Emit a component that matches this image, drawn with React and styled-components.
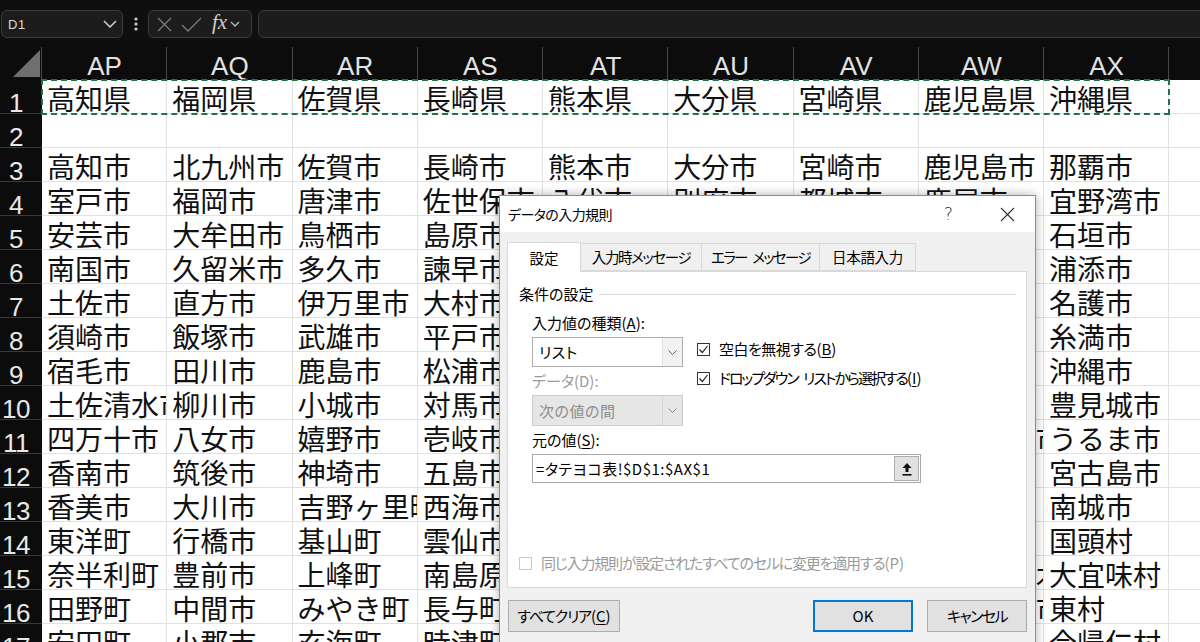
import React from "react";
import styled, { createGlobalStyle } from "styled-components";

const COLS = ["AP", "AQ", "AR", "AS", "AT", "AU", "AV", "AW", "AX", ""];
const PREFS = ["高知県", "福岡県", "佐賀県", "長崎県", "熊本県", "大分県", "宮崎県", "鹿児島県", "沖縄県"];

const CITIES = [
    ["高知市", "室戸市", "安芸市", "南国市", "土佐市", "須崎市", "宿毛市", "土佐清水市", "四万十市", "香南市", "香美市", "東洋町", "奈半利町", "田野町", "安田町"],
    ["北九州市", "福岡市", "大牟田市", "久留米市", "直方市", "飯塚市", "田川市", "柳川市", "八女市", "筑後市", "大川市", "行橋市", "豊前市", "中間市", "小郡市"],
    ["佐賀市", "唐津市", "鳥栖市", "多久市", "伊万里市", "武雄市", "鹿島市", "小城市", "嬉野市", "神埼市", "吉野ヶ里町", "基山町", "上峰町", "みやき町", "玄海町"],
    ["長崎市", "佐世保市", "島原市", "諫早市", "大村市", "平戸市", "松浦市", "対馬市", "壱岐市", "五島市", "西海市", "雲仙市", "南島原市", "長与町", "時津町"],
    ["熊本市", "八代市", "人吉市", "荒尾市", "水俣市", "玉名市", "山鹿市", "菊池市", "宇土市", "上天草市", "宇城市", "阿蘇市", "天草市", "合志市", "美里町"],
    ["大分市", "別府市", "中津市", "日田市", "佐伯市", "臼杵市", "津久見市", "竹田市", "豊後高田市", "杵築市", "宇佐市", "豊後大野市", "由布市", "国東市", "姫島村"],
    ["宮崎市", "都城市", "延岡市", "日南市", "小林市", "日向市", "串間市", "西都市", "えびの市", "三股町", "高原町", "国富町", "綾町", "高鍋町", "新富町"],
    ["鹿児島市", "鹿屋市", "枕崎市", "阿久根市", "出水市", "指宿市", "西之表市", "垂水市", "薩摩川内市", "日置市", "曽於市", "霧島市", "いちき串木野市", "南さつま市", "志布志市"],
    ["那覇市", "宜野湾市", "石垣市", "浦添市", "名護市", "糸満市", "沖縄市", "豊見城市", "うるま市", "宮古島市", "南城市", "国頭村", "大宜味村", "東村", "今帰仁村"],
];

// letter spacing narrows the kana, which are wider in Noto than in the Windows UI font
const TABS = [
    { label: "設定", w: 74, ls: 0, active: true },
    { label: "入力時メッセージ", w: 121, ls: -1.4 },
    { label: "エラー\u2002メッセージ", w: 118, ls: -1.7 },
    { label: "日本語入力", w: 96, ls: -0.3 },
];

export default function App() {
    const rows = [];
    for (let r = 2; r <= 17; r++) {
        rows.push(
            <React.Fragment key={r}>
                <RowHead>{r}</RowHead>
                {COLS.map((c, i) => (
                    <Cell key={c + i}>{r >= 3 && CITIES[i] ? CITIES[i][r - 3] : ""}</Cell>
                ))}
            </React.Fragment>
        );
    }

    return (
        <Page>
            <GlobalStyle />
            <Toolbar>
                <NameBox>
                    <span>D1</span>
                    <svg width="14" height="8" viewBox="0 0 14 8"><path d="M1 1 L7 7 L13 1" fill="none" stroke="#cfcfcf" strokeWidth="1.5" /></svg>
                </NameBox>
                <Grip>
                    <svg width="4" height="14" viewBox="0 0 4 14">
                        <circle cx="2" cy="2" r="1.6" fill="#cfcfcf" />
                        <circle cx="2" cy="7" r="1.6" fill="#cfcfcf" />
                        <circle cx="2" cy="12" r="1.6" fill="#cfcfcf" />
                    </svg>
                </Grip>
                <FormulaTools>
                    <svg width="15" height="15" viewBox="0 0 15 15"><path d="M1 1 L14 14 M14 1 L1 14" stroke="#7a7a7a" strokeWidth="1.4" /></svg>
                    <svg width="21" height="15" viewBox="0 0 21 15"><path d="M1 8 L7 14 L20 1" fill="none" stroke="#7a7a7a" strokeWidth="1.4" /></svg>
                    <Fx>fx</Fx>
                    <svg width="10" height="6" viewBox="0 0 10 6"><path d="M1 1 L5 5 L9 1" fill="none" stroke="#bdbdbd" strokeWidth="1.3" /></svg>
                </FormulaTools>
                <FormulaBar />
            </Toolbar>

            <Sheet>
                <Corner>
                    <svg width="27" height="27" viewBox="0 0 27 27"><polygon points="27,0 27,27 0,27" fill="#6f6f6f" /></svg>
                </Corner>
                {COLS.map((c, i) => <ColHead key={"h" + i}>{c}</ColHead>)}

                <RowHead>1</RowHead>
                <CopyBand>
                    {PREFS.map((p) => <Cell key={p}>{p}</Cell>)}
                </CopyBand>
                <Cell />

                {rows}
            </Sheet>

            <Dialog>
                <TitleBar>
                    <Tight $ls={-0.6}>データの入力規則</Tight>
                    <HelpMark>?</HelpMark>
                    <CloseMark>
                        <svg width="15" height="15" viewBox="0 0 15 15"><path d="M1 1 L14 14 M14 1 L1 14" stroke="#333" strokeWidth="1.1" /></svg>
                    </CloseMark>
                </TitleBar>

                <Body>
                    <TabRow>
                        {TABS.map((t) => (
                            <Tab key={t.label} $w={t.w} $active={t.active}>
                                <Tight $ls={t.ls}>{t.label}</Tight>
                            </Tab>
                        ))}
                    </TabRow>

                    <Panel>
                        <Legend>
                            <span>条件の設定</span>
                            <Rule />
                        </Legend>

                        <FormGrid>
                            <Label $area="l1">入力値の種類(<U>A</U>):</Label>
                            <Combo $area="c1">
                                <ComboText>リスト</ComboText>
                                <ComboArrow>
                                    <svg width="9" height="5" viewBox="0 0 9 5"><path d="M0.5 0.5 L4.5 4.5 L8.5 0.5" fill="none" stroke="#606060" strokeWidth="1" /></svg>
                                </ComboArrow>
                            </Combo>
                            <Checks>
                                <CheckRow>
                                    <CheckBox><CheckMark /></CheckBox>
                                    <span><Tight $ls={-0.5}>空白を無視する</Tight>(<U>B</U>)</span>
                                </CheckRow>
                                <CheckRow>
                                    <CheckBox><CheckMark /></CheckBox>
                                    <span><Tight $ls={-2}>{"ドロップダウン\u2002リストから選択する"}</Tight>(<U>I</U>)</span>
                                </CheckRow>
                            </Checks>
                            <Label $area="l2" $disabled>データ(D):</Label>
                            <Combo $area="c2" $disabled>
                                <ComboText>次の値の間</ComboText>
                                <ComboArrow $disabled>
                                    <svg width="9" height="5" viewBox="0 0 9 5"><path d="M0.5 0.5 L4.5 4.5 L8.5 0.5" fill="none" stroke="#8a8a8a" strokeWidth="1" /></svg>
                                </ComboArrow>
                            </Combo>
                            <Label $area="l3">元の値(<U>S</U>):</Label>
                            <SourceInput>
                                <SourceText>=タテヨコ表!$D$1:$AX$1</SourceText>
                                <RefButton>
                                    <svg width="10" height="14" viewBox="0 0 10 14">
                                        <polygon points="5,1 9.5,6 6.5,6 6.5,10 3.5,10 3.5,6 0.5,6" fill="#111" />
                                        <rect x="0.5" y="12" width="9" height="1.6" fill="#111" />
                                    </svg>
                                </RefButton>
                            </SourceInput>
                        </FormGrid>

                        <ApplyAll>
                            <CheckBox $disabled />
                            <span><Tight $ls={-1.2}>同じ入力規則が設定されたすべてのセルに変更を適用する</Tight>(P)</span>
                        </ApplyAll>
                    </Panel>

                    <ButtonRow>
                        <Button $w={112}><Tight $ls={-1.2}>すべてクリア</Tight>(<U>C</U>)</Button>
                        <Spacer />
                        <Button $w={100} $primary>OK</Button>
                        <Button $w={100}><Tight $ls={-1.6}>キャンセル</Tight></Button>
                    </ButtonRow>
                </Body>
            </Dialog>
        </Page>
    );
}

function CheckMark() {
    return (
        <svg width="11" height="11" viewBox="0 0 11 11">
            <path d="M1.5 5.5 L4.3 8.5 L9.5 2" fill="none" stroke="#222" strokeWidth="1.2" />
        </svg>
    );
}

const GlobalStyle = createGlobalStyle`
    html, body {
        margin: 0;
        padding: 0;
        background: #0c0c0c;
        overflow: hidden;
    }
    body {
        font-family: "Noto Sans CJK JP", "Noto Sans", sans-serif;
    }
`;

const Page = styled.div`
    position: relative;
    width: 1200px;
    height: 642px;
    overflow: hidden;
    background: #0c0c0c;
`;

// ---- formula bar ----

const Toolbar = styled.div`
    height: 40px;
    box-sizing: border-box;
    padding: 10px 0 2px 1px;
    display: flex;
    background: #0f0f0f;
`;

const Pill = styled.div`
    box-sizing: border-box;
    height: 28px;
    background: #1c1c1c;
    border: 1px solid #3b3b3b;
    border-radius: 6px;
    display: flex;
    align-items: center;
`;

const NameBox = styled(Pill)`
    width: 122px;
    padding: 0 5px 0 6px;
    justify-content: space-between;
    color: #dcdcdc;
    font: 13px "Liberation Sans", Arial, sans-serif;
    letter-spacing: 0.5px;
`;

const Grip = styled.div`
    width: 25px;
    display: flex;
    align-items: center;
    justify-content: center;
`;

const FormulaTools = styled(Pill)`
    width: 104px;
    padding: 0 0 0 8px;
    gap: 10px;

    svg:nth-of-type(2) {
        margin-left: -1px;
    }
`;

const Fx = styled.span`
    font: italic 21px/1 "Liberation Serif", "Times New Roman", serif;
    color: #cfcfcf;
    margin: -3px -7px 0 0;
`;

const FormulaBar = styled(Pill)`
    flex: 1;
    margin: 0 -20px 0 6px;
`;

// ---- sheet ----

const Sheet = styled.div`
    display: grid;
    grid-template-columns: 42px repeat(10, 125.25px);
    grid-template-rows: 40px repeat(17, 34px);
`;

const HeaderBase = styled.div`
    box-sizing: border-box;
    background: linear-gradient(#474747, #474747) right 7px / 1px 33px no-repeat, #0c0c0c;
`;

const Corner = styled(HeaderBase)`
    display: flex;
    align-items: flex-end;
    justify-content: flex-end;
    padding: 0 2px 3px 0;
`;

const ColHead = styled(HeaderBase)`
    color: #e2e2e2;
    font: 26px/28px "Liberation Sans", Arial, sans-serif;
    text-align: center;
    padding-top: 12px;
`;

const RowHead = styled.div`
    box-sizing: border-box;
    background: #0c0c0c;
    border-bottom: 1px solid #3a3a3a;
    color: #e8e8e8;
    font: 26px/20px "Liberation Sans", Arial, sans-serif;
    letter-spacing: -0.5px;
    display: flex;
    align-items: flex-end;
    justify-content: center;
    padding-right: 10px;
`;

const Cell = styled.div`
    box-sizing: border-box;
    background: #fff;
    border-right: 1px solid #e1e1e1;
    border-bottom: 1px solid #e1e1e1;
    color: #111;
    font: 28px/33px "Noto Sans CJK JP", sans-serif;
    padding: 2px 0 0 5px;
    white-space: nowrap;
    overflow: hidden;
`;

const CopyBand = styled.div`
    grid-column: 2 / 11;
    display: grid;
    grid-template-columns: repeat(9, 1fr);
    outline: 2px dashed #217346;
    outline-offset: -1px;
    position: relative;
    z-index: 1;
`;

// ---- dialog ----

const Dialog = styled.div`
    position: absolute;
    left: 499px;
    top: 195px;
    width: 537px;
    height: 470px;
    box-sizing: border-box;
    border: 1px solid #8c8c8c;
    background: #f0f0f0;
    box-shadow: 0 0 10px rgba(0, 0, 0, 0.3);
    font: 15px/20px "Noto Sans CJK JP", sans-serif;
    font-feature-settings: "palt";
    color: #000;
    z-index: 5;
`;

const Tight = styled.span`
    letter-spacing: ${(p) => p.$ls}px;
`;

const TitleBar = styled.div`
    height: 36px;
    background: #fff;
    display: flex;
    align-items: center;
    padding-left: 8px;
    font-size: 14px;
`;

const HelpMark = styled.span`
    margin-left: auto;
    font: 17px "DejaVu Sans", sans-serif;
    font-weight: 300;
    color: #333;
`;

const CloseMark = styled.span`
    display: flex;
    margin: 0 20px 0 47px;
`;

const Body = styled.div`
    padding: 10px 8px 0 7px;
    display: flex;
    flex-direction: column;
`;

const TabRow = styled.div`
    height: 29px;
    display: flex;
    align-items: flex-end;
    position: relative;
    z-index: 1;
`;

const Tab = styled.div`
    box-sizing: border-box;
    width: ${(p) => p.$w}px;
    height: ${(p) => (p.$active ? 30 : 28)}px;
    margin-bottom: ${(p) => (p.$active ? -1 : 0)}px;
    background: ${(p) => (p.$active ? "#fff" : "#f0f0f0")};
    border: 1px solid #d9d9d9;
    border-bottom: ${(p) => (p.$active ? "none" : "1px solid #d9d9d9")};
    border-left: ${(p) => (p.$active ? "1px solid #d9d9d9" : "none")};
    display: flex;
    align-items: center;
    justify-content: center;
    white-space: nowrap;
    font-size: 14.5px;
`;

const Panel = styled.div`
    height: 317px;
    box-sizing: border-box;
    background: #fff;
    border: 1px solid #d9d9d9;
    display: flex;
    flex-direction: column;
    padding: 12px 10px 14px 11px;
`;

const Legend = styled.div`
    display: flex;
    align-items: center;
    gap: 6px;
`;

const Rule = styled.div`
    flex: 1;
    height: 1px;
    background: #dcdcdc;
`;

const FormGrid = styled.div`
    margin: 9px 0 0 13px;
    display: grid;
    grid-template-columns: 151px auto;
    grid-template-rows: 20px 30px 20px 31px 20px 29px;
    grid-template-areas:
        "l1 ."
        "c1 ck"
        "l2 ck"
        "c2 ."
        "l3 l3"
        "in in";
    column-gap: 14px;
    row-gap: 4px;
`;

const Label = styled.div`
    grid-area: ${(p) => p.$area};
    color: ${(p) => (p.$disabled ? "#9a9a9a" : "#000")};
    white-space: nowrap;
`;

const U = styled.span`
    text-decoration: underline;
    text-underline-offset: 2px;
`;

const Combo = styled.div`
    grid-area: ${(p) => p.$area};
    box-sizing: border-box;
    display: flex;
    border: 1px solid ${(p) => (p.$disabled ? "#cccccc" : "#adadad")};
    background: ${(p) => (p.$disabled ? "#e6e6e6" : "#fff")};
    color: ${(p) => (p.$disabled ? "#8d8d8d" : "#000")};
`;

const ComboText = styled.div`
    flex: 1;
    display: flex;
    align-items: center;
    padding-left: 6px;
    letter-spacing: 0.5px;
`;

const ComboArrow = styled.div`
    width: 19px;
    display: flex;
    align-items: center;
    justify-content: center;
    border-left: 1px solid ${(p) => (p.$disabled ? "#d6d6d6" : "#e3e3e3")};
    background: ${(p) => (p.$disabled ? "#e6e6e6" : "#f2f2f2")};
`;

const Checks = styled.div`
    grid-area: ck;
    display: flex;
    flex-direction: column;
    gap: 9px;
    padding-top: 2px;
`;

const CheckRow = styled.div`
    display: flex;
    align-items: center;
    gap: 9px;
    white-space: nowrap;
`;

const CheckBox = styled.div`
    box-sizing: border-box;
    width: 13px;
    height: 13px;
    border: 1px solid ${(p) => (p.$disabled ? "#cacaca" : "#333")};
    background: #fff;
    display: flex;
    align-items: center;
    justify-content: center;
`;

const SourceInput = styled.div`
    grid-area: in;
    width: 389px;
    box-sizing: border-box;
    border: 1px solid #a8a8a8;
    background: #fff;
    display: flex;
    align-items: center;
    padding: 0 1px 0 3px;
`;

const SourceText = styled.div`
    flex: 1;
    letter-spacing: 0.5px;
`;

const RefButton = styled.div`
    box-sizing: border-box;
    width: 25px;
    height: 25px;
    background: #e1e1e1;
    border: 1px solid #adadad;
    display: flex;
    align-items: center;
    justify-content: center;
`;

const ApplyAll = styled.div`
    margin-top: auto;
    display: flex;
    align-items: center;
    gap: 9px;
    color: #9a9a9a;
    white-space: nowrap;
`;

const ButtonRow = styled.div`
    margin-top: 12px;
    display: flex;
    gap: 14px;
    padding-left: 1px;
`;

const Spacer = styled.div`
    flex: 1;
`;

const Button = styled.button`
    box-sizing: border-box;
    width: ${(p) => p.$w}px;
    height: 32px;
    padding: 0;
    background: #e1e1e1;
    border: 1px solid ${(p) => (p.$primary ? "#0078d7" : "#adadad")};
    box-shadow: ${(p) => (p.$primary ? "inset 0 0 0 1px #0078d7" : "none")};
    font: inherit;
    color: #000;
`;
